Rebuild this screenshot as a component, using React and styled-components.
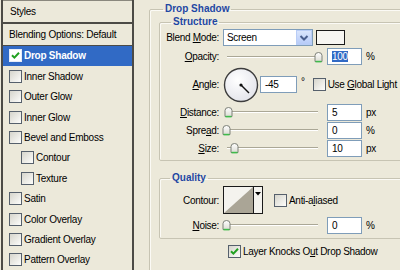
import React from "react";
import styled, { createGlobalStyle } from "styled-components";

// Global page reset

const GlobalStyle = createGlobalStyle`
  html, body {
    margin: 0;
    padding: 0;
    width: 400px;
    height: 270px;
    overflow: hidden;
    background: #ece9da;
  }
  body {
    font-family: "Liberation Sans", Arial, sans-serif;
    font-size: 10px;
    color: #000;
  }
`;

// Styled components

const Dialog = styled.div`
  display: flex;
  width: 400px;
  height: 270px;
  overflow: hidden;
  background: #ece9da;
`;

const Sidebar = styled.div`
  flex: 0 0 133px;
  box-sizing: border-box;
  margin-left: 1px;
  border-left: 2px solid #4c4b46;
  border-right: 2px solid #4c4b46;
  display: flex;
  flex-direction: column;
  letter-spacing: -0.25px;
`;

const HeadRow = styled.div`
  box-sizing: border-box;
  height: ${(p) => p.$h}px;
  display: flex;
  align-items: center;
  padding-left: ${(p) => p.$pad}px;
  border-top: ${(p) => (p.$top ? "1px solid #8a887e" : "none")};
  border-bottom: ${(p) => p.$bottom}px solid #4c4b46;
  white-space: nowrap;
`;

const StyleItem = styled.div`
  flex: 0 0 20.4px;
  display: flex;
  align-items: center;
  gap: 2px;
  padding-left: ${(p) => (p.$indent ? 18 : 6)}px;
  background: ${(p) => (p.$active ? "#316ac5" : "transparent")};
  color: ${(p) => (p.$active ? "#fff" : "#000")};
  font-weight: ${(p) => (p.$active ? "bold" : "normal")};
  white-space: nowrap;
`;

const Main = styled.div`
  flex: 1;
  padding: 3px 0 0 15px;
  min-width: 0;
  letter-spacing: -0.3px;
`;

const Group = styled.fieldset`
  margin: ${(p) => p.$mt || 0}px 0 0 0;
  padding: 0 0 ${(p) => p.$pb || 0}px ${(p) => p.$pl || 0}px;
  border: 1px solid #c7c4b3;
  border-radius: 2px;
  width: ${(p) => (p.$w ? `${p.$w}px` : "auto")};
  min-inline-size: 0;
  box-shadow: inset 1px 1px 0 #fbfaf5;
`;

const Legend = styled.legend`
  margin-left: ${(p) => p.$ml}px;
  padding: 0 2px;
  line-height: 12px;
  font-weight: bold;
  letter-spacing: 0;
  color: #1f47a2;
`;

const FieldRow = styled.div`
  display: grid;
  grid-template-columns: 59px auto;
  column-gap: 4px;
  align-items: center;
  height: ${(p) => p.$h}px;
`;

const Label = styled.span`
  text-align: right;
  white-space: nowrap;
`;

const Controls = styled.div`
  display: flex;
  align-items: center;
  white-space: nowrap;
`;

const Select = styled.div`
  box-sizing: border-box;
  width: 90px;
  height: 17px;
  border: 1px solid #7f9db9;
  background: #fff;
  display: flex;
  align-items: center;
  justify-content: space-between;
  padding-left: 3px;
`;

const SelectButton = styled.div`
  box-sizing: border-box;
  width: 16px;
  height: 15px;
  background: linear-gradient(#d9e5fd, #b7cbf8);
  border: 1px solid #b9cdf6;
  display: flex;
  align-items: center;
  justify-content: center;
`;

const Swatch = styled.div`
  box-sizing: border-box;
  width: 29px;
  height: 15px;
  margin-left: 3px;
  border: 1px solid #1a1a1a;
  background: #f7f6f2;
`;

const SliderBox = styled.div`
  position: relative;
  width: 100px;
  height: 14px;
`;

const Track = styled.div`
  position: absolute;
  left: 4px;
  right: 5px;
  top: 6px;
  border-top: 1px solid #aaa796;
  border-bottom: 1px solid #fff;
`;

const ThumbSvg = styled.svg`
  position: absolute;
  top: 2px;
`;

const NumField = styled.div`
  box-sizing: border-box;
  width: ${(p) => p.$w || 35}px;
  height: 17px;
  margin-left: ${(p) => (p.$ml == null ? 4 : p.$ml)}px;
  border: 1px solid #7f9db9;
  background: #fff;
  padding-left: 4px;
  display: flex;
  align-items: center;
`;

const Selected = styled.span`
  background: #316ac5;
  color: #fff;
`;

const Unit = styled.span`
  margin-left: 4px;
`;

const Degree = styled.span`
  margin-left: 4px;
  padding-bottom: 6px;
`;

const CheckLabel = styled.span`
  display: flex;
  align-items: center;
  gap: 2px;
  margin-left: ${(p) => p.$ml || 0}px;
  white-space: nowrap;
`;

const Box = styled.span`
  box-sizing: border-box;
  width: 13px;
  height: 13px;
  flex: 0 0 13px;
  border: 1px solid ${(p) => (p.$light ? "#e6ecf8" : "#56606c")};
  background: ${(p) =>
    p.$light ? "#fff" : "linear-gradient(135deg, #d6d5cc, #fdfdfb)"};
  display: flex;
  align-items: center;
  justify-content: center;
`;

const ContourBox = styled.div`
  box-sizing: border-box;
  width: 40px;
  height: 28px;
  border: 1px solid #1a1a1a;
  background: #f4f3ee;
  display: flex;
`;

const ContourButton = styled.div`
  flex: 0 0 9px;
  border-left: 1px solid #1a1a1a;
  display: flex;
  justify-content: center;
  padding-top: 5px;
  box-sizing: border-box;
`;

const KnockRow = styled.div`
  display: flex;
  margin: 6px 0 0 69px;
  padding-bottom: 30px;
`;

// Drawings

const Check = () => (
  <svg width="11" height="11" viewBox="0 0 11 11">
    <path d="M2 5.2 L4.4 7.6 L9 2.8" fill="none" stroke="#21a121" strokeWidth="2" />
  </svg>
);

const CheckBox = ({ checked, light }) => (
  <Box $light={light}>{checked ? <Check /> : null}</Box>
);

const Thumb = ({ pct }) => (
  <ThumbSvg width="9" height="11" viewBox="0 0 9 11" style={{ left: 3 + pct * 0.92 - 4.5 }}>
    <defs>
      <linearGradient id="tg" x1="0" y1="0" x2="0" y2="1">
        <stop offset="0" stopColor="#ffffff" />
        <stop offset="1" stopColor="#dcdcd4" />
      </linearGradient>
    </defs>
    <path d="M1 9.5 V3.5 Q1 0.5 4.5 0.5 Q8 0.5 8 3.5 V9.5 Z" fill="url(#tg)" stroke="#7d8078" />
    <line x1="1.5" y1="9.6" x2="7.5" y2="9.6" stroke="#3fbb4b" strokeWidth="1.6" />
  </ThumbSvg>
);

const Slider = ({ pct }) => (
  <SliderBox>
    <Track />
    <Thumb pct={pct} />
  </SliderBox>
);

const Dial = () => (
  <svg width="36" height="36" viewBox="0 0 36 36">
    <defs>
      <radialGradient id="dg" cx="0.4" cy="0.35" r="0.7">
        <stop offset="0" stopColor="#ffffff" />
        <stop offset="1" stopColor="#e2e3ea" />
      </radialGradient>
    </defs>
    <circle cx="18" cy="18" r="16.5" fill="url(#dg)" stroke="#3d3d3d" strokeWidth="1.4" />
    <line x1="18" y1="18" x2="26" y2="26" stroke="#111" strokeWidth="1.4" />
    <circle cx="18" cy="18" r="1.6" fill="#111" />
  </svg>
);

const Chevron = () => (
  <svg width="10" height="8" viewBox="0 0 10 8">
    <path d="M1.5 2 L5 5.5 L8.5 2" fill="none" stroke="#4a5f8f" strokeWidth="2" />
  </svg>
);

const styleItems = [
  { name: "Drop Shadow", active: true, checked: true },
  { name: "Inner Shadow" },
  { name: "Outer Glow" },
  { name: "Inner Glow" },
  { name: "Bevel and Emboss" },
  { name: "Contour", indent: true },
  { name: "Texture", indent: true },
  { name: "Satin" },
  { name: "Color Overlay" },
  { name: "Gradient Overlay" },
  { name: "Pattern Overlay" },
];

export default function App() {
  return (
    <>
      <GlobalStyle />
      <Dialog>
        <Sidebar>
          <HeadRow $h={25} $pad={7} $top $bottom={2}>
            Styles
          </HeadRow>
          <HeadRow $h={22} $pad={6} $bottom={1}>
            Blending Options: Default
          </HeadRow>
          {styleItems.map((item) => (
            <StyleItem key={item.name} $active={item.active} $indent={item.indent}>
              <CheckBox checked={item.checked} light={item.active} />
              {item.name}
            </StyleItem>
          ))}
        </Sidebar>

        <Main>
          <Group $w={270} $pl={9}>
            <Legend $ml={4}>Drop Shadow</Legend>
            <Group $mt={1} $pb={3}>
              <Legend $ml={11}>Structure</Legend>
              <FieldRow $h={19}>
                <Label>
                  Blend <u>M</u>ode:
                </Label>
                <Controls>
                  <Select>
                    Screen
                    <SelectButton>
                      <Chevron />
                    </SelectButton>
                  </Select>
                  <Swatch />
                </Controls>
              </FieldRow>
              <FieldRow $h={19}>
                <Label>
                  <u>O</u>pacity:
                </Label>
                <Controls>
                  <Slider pct={100} />
                  <NumField>
                    <Selected>100</Selected>
                  </NumField>
                  <Unit>%</Unit>
                </Controls>
              </FieldRow>
              <FieldRow $h={37}>
                <Label>
                  <u>A</u>ngle:
                </Label>
                <Controls>
                  <Dial />
                  <NumField $w={37} $ml={1}>
                    -45
                  </NumField>
                  <Degree>°</Degree>
                  <CheckLabel $ml={8}>
                    <CheckBox />
                    <span>
                      Use <u>G</u>lobal Light
                    </span>
                  </CheckLabel>
                </Controls>
              </FieldRow>
              <FieldRow $h={18}>
                <Label>
                  <u>D</u>istance:
                </Label>
                <Controls>
                  <Slider pct={3} />
                  <NumField>5</NumField>
                  <Unit>px</Unit>
                </Controls>
              </FieldRow>
              <FieldRow $h={18}>
                <Label>
                  Spre<u>a</u>d:
                </Label>
                <Controls>
                  <Slider pct={0} />
                  <NumField>0</NumField>
                  <Unit>%</Unit>
                </Controls>
              </FieldRow>
              <FieldRow $h={18}>
                <Label>
                  <u>S</u>ize:
                </Label>
                <Controls>
                  <Slider pct={9} />
                  <NumField>10</NumField>
                  <Unit>px</Unit>
                </Controls>
              </FieldRow>
            </Group>

            <Group $mt={11} $pb={4}>
              <Legend $ml={10}>Quality</Legend>
              <FieldRow $h={32}>
                <Label>Contour:</Label>
                <Controls>
                  <ContourBox>
                    <svg width="29" height="26" viewBox="0 0 29 26">
                      <polygon points="0,26 29,0 29,26" fill="#aaa596" />
                    </svg>
                    <ContourButton>
                      <svg width="6" height="4" viewBox="0 0 6 4">
                        <polygon points="0,0 6,0 3,3.5" fill="#000" />
                      </svg>
                    </ContourButton>
                  </ContourBox>
                  <CheckLabel $ml={11}>
                    <CheckBox />
                    <span>
                      Anti-a<u>l</u>iased
                    </span>
                  </CheckLabel>
                </Controls>
              </FieldRow>
              <FieldRow $h={18}>
                <Label>
                  <u>N</u>oise:
                </Label>
                <Controls>
                  <Slider pct={1} />
                  <NumField>0</NumField>
                  <Unit>%</Unit>
                </Controls>
              </FieldRow>
            </Group>

            <KnockRow>
              <CheckLabel>
                <CheckBox checked />
                <span>
                  Layer Knocks O<u>u</u>t Drop Shadow
                </span>
              </CheckLabel>
            </KnockRow>
          </Group>
        </Main>
      </Dialog>
    </>
  );
}
